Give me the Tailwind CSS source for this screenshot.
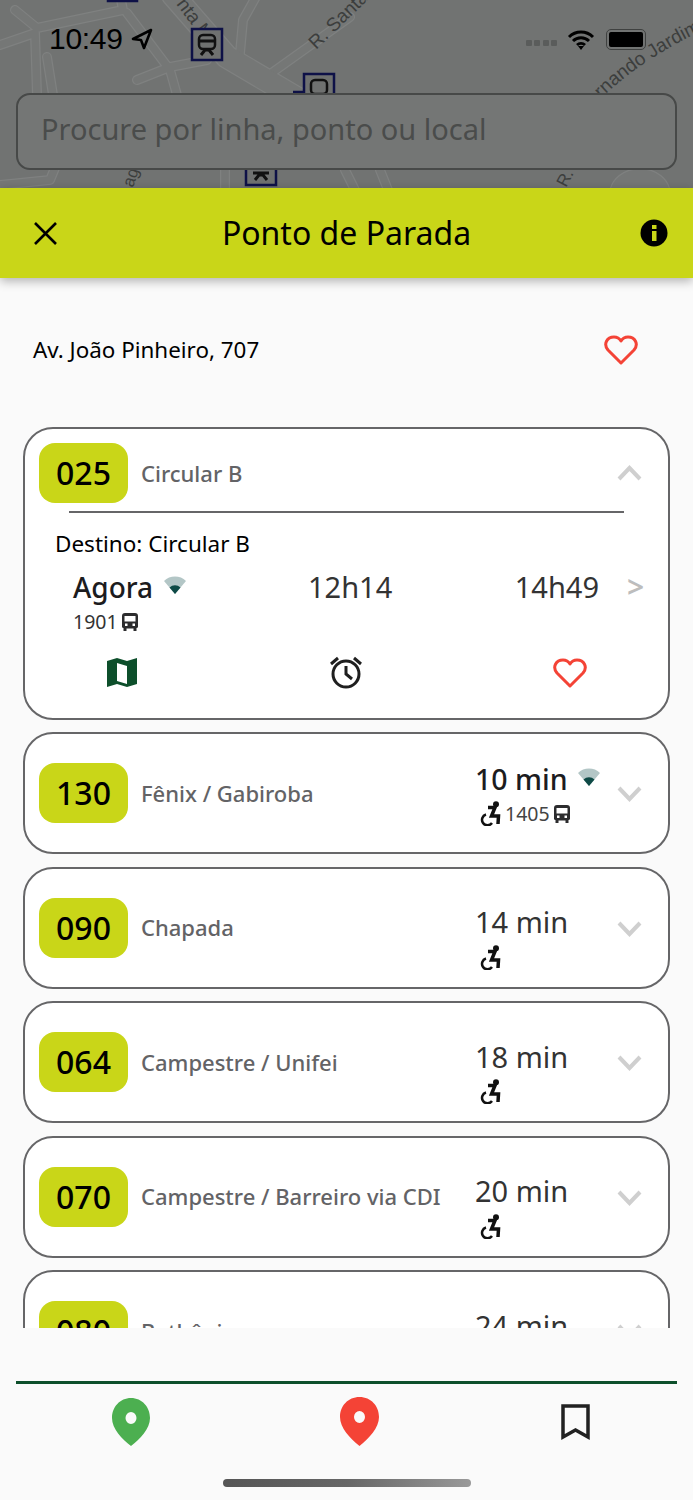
<!DOCTYPE html>
<html lang="pt-BR">
<head>
    <meta charset="UTF-8">
    <meta name="viewport" content="width=device-width, initial-scale=1.0">
    <title>Ponto de Parada</title>
    <script src="https://cdn.jsdelivr.net/npm/@tailwindcss/browser@4"></script>
</head>
<body class="font-['Noto_Sans','Open_Sans',sans-serif] bg-[#fafafa]">
    <div class="w-[693px] h-[1500px] flex flex-col overflow-hidden">
        <!-- Map + search -->
        <section class="relative h-[188px] shrink-0 bg-[#717372] overflow-hidden">
            <svg class="absolute inset-0" width="693" height="188" viewBox="0 0 693 188" fill="none">
                <g stroke="#7f8180" stroke-linecap="round" stroke-linejoin="round">
                    <path stroke-width="10" d="M15 10 L37 28 L123 10 L120 -5 M0 45 L35 33 L37 95 M47 57 L53 95 M127 13 L170 70 L177 95 M137 80 L170 67 L207 60 M240 53 L243 20 L257 -5 M273 72 L350 17 M225 165 V190 M345 170 L355 190 M380 170 L388 190 M0 185 L50 180 L55 168"/>
                    <path stroke-width="24" d="M173 -5 L227 57 L300 100"/>
                    <path stroke-width="22" d="M620 195 A20 16 0 0 1 660 195"/>
                </g>
                <g stroke="#757776" stroke-linecap="round" stroke-linejoin="round">
                    <path stroke-width="7.500" d="M15 10 L37 28 L123 10 L120 -5 M0 45 L35 33 L37 95 M47 57 L53 95 M127 13 L170 70 L177 95 M137 80 L170 67 L207 60 M240 53 L243 20 L257 -5 M273 72 L350 17 M225 165 V190 M345 170 L355 190 M380 170 L388 190 M0 185 L50 180 L55 168"/>
                    <path stroke-width="21.500" d="M173 -5 L227 57 L300 100"/>
                    <path stroke-width="19.500" d="M620 195 A20 16 0 0 1 660 195"/>
                </g>
                <text transform="translate(176 4) rotate(53)" fill="#3c3e3d" font-size="19" font-family="Liberation Sans">nta Ma</text>
                <text transform="translate(316 50) rotate(-44)" fill="#3c3e3d" font-size="19" font-family="Liberation Sans">R. Santa</text>
                <path id="fernandoRoad" d="M594 106 Q 636 60 720 22"/>
                <text fill="#3c3e3d" font-size="19" font-family="Liberation Sans"><textPath href="#fernandoRoad">ernando Jardim</textPath></text>
                <text transform="translate(133 188) rotate(-72)" fill="#3c3e3d" font-size="17" font-family="Liberation Sans">age</text>
                <text transform="translate(566 188) rotate(-62)" fill="#3c3e3d" font-size="17" font-family="Liberation Sans">R. C</text>
                <!-- stop markers -->
                <rect x="108" y="-30" width="29" height="31" stroke="#0e1147" stroke-width="2.500"/>
                <g transform="translate(192 29)">
                    <rect width="30" height="31" fill="#6f7170" stroke="#0e1147" stroke-width="2.500"/>
                    <rect x="7" y="6" width="16" height="14" rx="4" stroke="#111" stroke-width="2.500"/>
                    <path d="M7 12 H23 M9 26 L13 21 H17 L21 26" stroke="#111" stroke-width="3"/>
                </g>
                <path d="M293 92 H303" stroke="#0e1147" stroke-width="2.500"/>
                <g transform="translate(304 74)">
                    <rect width="30" height="31" fill="#6f7170" stroke="#0e1147" stroke-width="2.500"/>
                    <rect x="7" y="6" width="16" height="14" rx="4" stroke="#111" stroke-width="2.500"/>
                </g>
                <g transform="translate(246 154)">
                    <rect width="30" height="31" fill="#6f7170" stroke="#0e1147" stroke-width="2.500"/>
                    <path d="M7 19 H23 M9 26 L13 21 H17 L21 26" stroke="#111" stroke-width="3"/>
                </g>
            </svg>

            <!-- status bar -->
            <div class="absolute left-[49px] right-[47px] top-[22px] flex items-center justify-between text-black">
                <div class="flex items-center gap-[8px]">
                    <span class="font-['Liberation_Sans'] text-[30px] leading-[34px] tracking-[-0.3px]">10:49</span>
                    <svg width="22" height="22" viewBox="0 0 22 22" fill="none"><path d="M20 2 L2 11 L10 12 L13 20 Z" stroke="#000" stroke-width="2.600" stroke-linejoin="round"/></svg>
                </div>
                <div class="flex items-center gap-[10px] pt-[1px]">
                    <div class="flex gap-[2.500px] mt-[6px]">
                        <span class="w-[6px] h-[6px] bg-[#5a5c5b] rounded-[1px]"></span>
                        <span class="w-[6px] h-[6px] bg-[#5a5c5b] rounded-[1px]"></span>
                        <span class="w-[6px] h-[6px] bg-[#5a5c5b] rounded-[1px]"></span>
                        <span class="w-[6px] h-[6px] bg-[#5a5c5b] rounded-[1px]"></span>
                    </div>
                    <svg width="28" height="20" viewBox="0 0 28 20" fill="none">
                        <path d="M2 7 A17 17 0 0 1 26 7 M6 11 A11.500 11.500 0 0 1 22 11 M10 15 A6 6 0 0 1 18 15" stroke="#000" stroke-width="3"/>
                        <path d="M11 16 L14 20 L17 16 Z" fill="#000"/>
                    </svg>
                    <div class="w-[40px] h-[21px] rounded-[5px] border border-[#3f4140] p-[2px] ml-[1px]">
                        <div class="w-full h-full bg-black rounded-[2px]"></div>
                    </div>
                </div>
            </div>

            <!-- search -->
            <div class="absolute left-[16px] top-[93px] w-[661px] h-[77px] rounded-[14px] border-2 border-[#474948] bg-[#747675] flex items-center pl-[23px]">
                <span class="text-[29px] leading-[40px] -mt-[6px] text-[#4a4c4b]">Procure por linha, ponto ou local</span>
            </div>
        </section>

        <!-- Header -->
        <header class="relative z-10 h-[90px] shrink-0 bg-[#c9d618] flex items-center justify-between pl-[33px] pr-[25px] shadow-[0_3px_10px_rgba(0,0,0,0.3)]">
            <svg width="25" height="25" viewBox="0 0 25 25" fill="none"><path d="M2 2 L23 23 M23 2 L2 23" stroke="#000" stroke-width="2.600"/></svg>
            <h1 class="text-[32px] leading-none text-black -ml-[5px]">Ponto de Parada</h1>
            <svg width="28" height="28" viewBox="0 0 28 28"><circle cx="14" cy="14" r="13.500" fill="#000"/><rect x="12" y="12" width="4.500" height="10" fill="#c9d618"/><rect x="12" y="6" width="4.500" height="4" fill="#c9d618"/></svg>
        </header>

        <!-- Content -->
        <main class="flex-1 min-h-0 overflow-hidden bg-[#fafafa]">
            <div class="h-[149px] flex items-center justify-between pl-[33px] pr-[55px] pb-[5px]">
                <span class="text-[22.400px] text-black">Av. João Pinheiro, 707</span>
                <svg width="34" height="30" viewBox="0 0 34 30" fill="none"><path d="M17 28 L4 15 C-1 9 3 2 10 2 C13 2 15.500 3.500 17 6 C18.500 3.500 21 2 24 2 C31 2 35 9 30 15 Z" stroke="#f44336" stroke-width="3" stroke-linejoin="round"/></svg>
            </div>

            <div class="flex flex-col gap-[12.500px] px-[23px]">
                <!-- expanded card -->
                <article class="h-[292.500px] shrink-0 rounded-[30px] border-2 border-[#666668] bg-white pt-[14px]">
                    <div class="flex items-center pl-[14px] pr-[26px]">
                        <div class="w-[89px] h-[60px] rounded-[16px] bg-[#c9d618] flex items-center justify-center text-[32px] font-medium text-black">025</div>
                        <span class="ml-[13px] text-[22px] font-medium text-[#636366]">Circular B</span>
                        <svg class="ml-auto" width="25" height="16" viewBox="0 0 25 16" fill="none"><path d="M2 14 L12.500 3 L23 14" stroke="#cfcfcf" stroke-width="4"/></svg>
                    </div>
                    <div class="mx-[44px] mt-[8px] h-[1.500px] bg-[#666668]"></div>
                    <p class="ml-[30px] mt-[15px] text-[22.500px] leading-[32px] text-black">Destino: Circular B</p>
                    <div class="flex items-start mt-[7px] pl-[48px]">
                        <div class="w-[180px]">
                            <div class="flex items-center gap-[10px]">
                                <span class="text-[28px] leading-[40px] font-medium text-[#1c1c1e]">Agora</span>
                                <svg class="-mt-[3px]" width="24" height="19" viewBox="0 0 24 19"><path d="M1 5 A16 16 0 0 1 23 5 L12 18 Z" fill="#b3c6c6"/><path d="M6.500 11.500 A8 8 0 0 1 17.500 11.500 L12 18 Z" fill="#0e4a46"/></svg>
                            </div>
                            <div class="flex items-center gap-[4px] mt-[1px]">
                                <span class="text-[19.500px] leading-[28px] text-[#333]">1901</span>
                                <svg width="16" height="18" viewBox="0 0 16 18"><path fill-rule="evenodd" d="M3 0 H13 A3 3 0 0 1 16 3 V14 A1.500 1.500 0 0 1 14.500 15 V18 H11.500 V15.500 H4.500 V18 H1.500 V15 A1.500 1.500 0 0 1 0 14 V3 A3 3 0 0 1 3 0 Z M2.500 3 V8.500 H13.500 V3 Z M3 10.500 V13 H5.500 V10.500 Z M10.500 10.500 V13 H13 V10.500 Z" fill="#2c2c2e"/></svg>
                            </div>
                        </div>
                        <span class="w-[139px] pl-[55px] text-[29px] leading-[40px] text-[#333]">12h14</span>
                        <span class="w-[207px] text-right text-[29px] leading-[40px] text-[#333]">14h49</span>
                        <span class="ml-[28px] text-[30px] leading-[40px] font-semibold text-[#bdbdbd]">&gt;</span>
                    </div>
                    <div class="flex items-center justify-between pl-[82px] pr-[81px] mt-[20px]">
                        <svg width="30" height="30" viewBox="0 0 30 30"><path fill-rule="evenodd" d="M0 3 L10 0 L20 3 L30 0 V26 L20 29 L10 26 L0 29 Z M10 5 V23 L20 26 V8 Z" fill="#0d4f2b"/></svg>
                        <svg class="ml-[2px]" width="34" height="34" viewBox="0 0 34 34" fill="none">
                            <circle cx="17" cy="18" r="13" stroke="#1f1f1f" stroke-width="3"/>
                            <path d="M17 10 V18 L23 23 M2 8 L9 2 M32 8 L25 2" stroke="#1f1f1f" stroke-width="3"/>
                        </svg>
                        <svg width="34" height="30" viewBox="0 0 34 30" fill="none"><path d="M17 28 L4 15 C-1 9 3 2 10 2 C13 2 15.500 3.500 17 6 C18.500 3.500 21 2 24 2 C31 2 35 9 30 15 Z" stroke="#f44336" stroke-width="3" stroke-linejoin="round"/></svg>
                    </div>
                </article>

                <!-- 130 -->
                <article class="h-[122px] shrink-0 rounded-[30px] border-2 border-[#666668] bg-white flex items-center pl-[14px] pr-[26px]">
                    <div class="w-[89px] h-[60px] rounded-[16px] bg-[#c9d618] flex items-center justify-center text-[32px] font-medium text-black">130</div>
                    <span class="ml-[13px] text-[22px] font-medium text-[#636366]">Fênix / Gabiroba</span>
                    <div class="ml-auto w-[128px]">
                        <div class="flex items-center gap-[9px] whitespace-nowrap">
                            <span class="text-[28.500px] leading-[40px] font-medium text-[#1c1c1e]">10 min</span>
                            <svg class="-mt-[2px]" width="24" height="19" viewBox="0 0 24 19"><path d="M1 5 A16 16 0 0 1 23 5 L12 18 Z" fill="#b3c6c6"/><path d="M6.500 11.500 A8 8 0 0 1 17.500 11.500 L12 18 Z" fill="#0e4a46"/></svg>
                        </div>
                        <div class="flex items-center gap-[4px] pl-[5px] mt-[1px]">
                            <svg width="21" height="25" viewBox="0 0 21 25" fill="none"><circle cx="16" cy="3.300" r="3" fill="#111"/><path d="M8 6.500 H15 L11.500 15 H18.500 L18 23" stroke="#111" stroke-width="3.500"/><path d="M6 13.500 A5.500 5.500 0 1 0 12 22" stroke="#111" stroke-width="2.500"/></svg>
                            <span class="text-[19.500px] leading-[28px] text-[#444]">1405</span>
                            <svg width="16" height="18" viewBox="0 0 16 18"><path fill-rule="evenodd" d="M3 0 H13 A3 3 0 0 1 16 3 V14 A1.500 1.500 0 0 1 14.500 15 V18 H11.500 V15.500 H4.500 V18 H1.500 V15 A1.500 1.500 0 0 1 0 14 V3 A3 3 0 0 1 3 0 Z M2.500 3 V8.500 H13.500 V3 Z M3 10.500 V13 H5.500 V10.500 Z M10.500 10.500 V13 H13 V10.500 Z" fill="#2c2c2e"/></svg>
                        </div>
                    </div>
                    <svg class="ml-[14px] mt-[2px]" width="25" height="16" viewBox="0 0 25 16" fill="none"><path d="M2 2 L12.500 13 L23 2" stroke="#cfcfcf" stroke-width="4"/></svg>
                </article>

                <!-- 090 -->
                <article class="h-[122px] shrink-0 rounded-[30px] border-2 border-[#666668] bg-white flex items-center pl-[14px] pr-[26px]">
                    <div class="w-[89px] h-[60px] rounded-[16px] bg-[#c9d618] flex items-center justify-center text-[32px] font-medium text-black">090</div>
                    <span class="ml-[13px] text-[22px] font-medium text-[#636366]">Chapada</span>
                    <div class="ml-auto w-[128px] mt-[18px]">
                        <span class="block text-[29px] leading-[40px] text-[#333]">14 min</span>
                        <div class="pl-[5px] h-[28px] mt-[1px] flex items-center">
                            <svg width="21" height="25" viewBox="0 0 21 25" fill="none"><circle cx="16" cy="3.300" r="3" fill="#111"/><path d="M8 6.500 H15 L11.500 15 H18.500 L18 23" stroke="#111" stroke-width="3.500"/><path d="M6 13.500 A5.500 5.500 0 1 0 12 22" stroke="#111" stroke-width="2.500"/></svg>
                        </div>
                    </div>
                    <svg class="ml-[14px] mt-[2px]" width="25" height="16" viewBox="0 0 25 16" fill="none"><path d="M2 2 L12.500 13 L23 2" stroke="#cfcfcf" stroke-width="4"/></svg>
                </article>

                <!-- 064 -->
                <article class="h-[122px] shrink-0 rounded-[30px] border-2 border-[#666668] bg-white flex items-center pl-[14px] pr-[26px]">
                    <div class="w-[89px] h-[60px] rounded-[16px] bg-[#c9d618] flex items-center justify-center text-[32px] font-medium text-black">064</div>
                    <span class="ml-[13px] text-[22px] font-medium text-[#636366]">Campestre / Unifei</span>
                    <div class="ml-auto w-[128px] mt-[18px]">
                        <span class="block text-[29px] leading-[40px] text-[#333]">18 min</span>
                        <div class="pl-[5px] h-[28px] mt-[1px] flex items-center">
                            <svg width="21" height="25" viewBox="0 0 21 25" fill="none"><circle cx="16" cy="3.300" r="3" fill="#111"/><path d="M8 6.500 H15 L11.500 15 H18.500 L18 23" stroke="#111" stroke-width="3.500"/><path d="M6 13.500 A5.500 5.500 0 1 0 12 22" stroke="#111" stroke-width="2.500"/></svg>
                        </div>
                    </div>
                    <svg class="ml-[14px] mt-[2px]" width="25" height="16" viewBox="0 0 25 16" fill="none"><path d="M2 2 L12.500 13 L23 2" stroke="#cfcfcf" stroke-width="4"/></svg>
                </article>

                <!-- 070 -->
                <article class="h-[122px] shrink-0 rounded-[30px] border-2 border-[#666668] bg-white flex items-center pl-[14px] pr-[26px]">
                    <div class="w-[89px] h-[60px] rounded-[16px] bg-[#c9d618] flex items-center justify-center text-[32px] font-medium text-black">070</div>
                    <span class="ml-[13px] text-[22px] font-medium text-[#636366] whitespace-nowrap">Campestre / Barreiro via CDI</span>
                    <div class="ml-auto w-[128px] mt-[18px]">
                        <span class="block text-[29px] leading-[40px] text-[#333]">20 min</span>
                        <div class="pl-[5px] h-[28px] mt-[1px] flex items-center">
                            <svg width="21" height="25" viewBox="0 0 21 25" fill="none"><circle cx="16" cy="3.300" r="3" fill="#111"/><path d="M8 6.500 H15 L11.500 15 H18.500 L18 23" stroke="#111" stroke-width="3.500"/><path d="M6 13.500 A5.500 5.500 0 1 0 12 22" stroke="#111" stroke-width="2.500"/></svg>
                        </div>
                    </div>
                    <svg class="ml-[14px] mt-[2px]" width="25" height="16" viewBox="0 0 25 16" fill="none"><path d="M2 2 L12.500 13 L23 2" stroke="#cfcfcf" stroke-width="4"/></svg>
                </article>

                <!-- 080, cut off by the footer -->
                <article class="h-[122px] shrink-0 rounded-[30px] border-2 border-[#666668] bg-white flex items-center pl-[14px] pr-[26px]">
                    <div class="w-[89px] h-[60px] rounded-[16px] bg-[#c9d618] flex items-center justify-center text-[32px] font-medium text-black">080</div>
                    <span class="ml-[13px] text-[22px] font-medium text-[#636366]">Bethânia</span>
                    <div class="ml-auto w-[128px] mt-[18px]">
                        <span class="block text-[29px] leading-[40px] text-[#333]">24 min</span>
                        <div class="h-[28px] mt-[1px]"></div>
                    </div>
                    <svg class="ml-[14px] mt-[2px]" width="25" height="16" viewBox="0 0 25 16" fill="none"><path d="M2 2 L12.500 13 L23 2" stroke="#cfcfcf" stroke-width="4"/></svg>
                </article>
            </div>
        </main>

        <!-- Footer nav -->
        <footer class="relative h-[172px] shrink-0 bg-[#fafafa] pt-[53px]">
            <div class="mx-[16px] h-[3px] bg-[#0d4f2b]"></div>
            <div class="relative h-[116px]">
                <svg class="absolute left-[112px] top-[14px]" width="38" height="48" viewBox="0 0 38 48"><path fill-rule="evenodd" d="M19 0 C30 0 38 9 38 20 C38 31 28 41 19 48 C10 41 0 31 0 20 C0 9 8 0 19 0 Z M19 14 A5.500 6 0 1 0 19 26 A5.500 6 0 1 0 19 14 Z" fill="#4caf50"/></svg>
                <svg class="absolute left-[340px] top-[13px]" width="39" height="49" viewBox="0 0 39 49"><path fill-rule="evenodd" d="M19.500 0 C31 0 39 9 39 20 C39 31 29 41 19.500 49 C10 41 0 31 0 20 C0 9 8 0 19.500 0 Z M19.500 14 A5.500 6 0 1 0 19.500 26 A5.500 6 0 1 0 19.500 14 Z" fill="#f44336"/></svg>
                <svg class="absolute left-[561px] top-[20px]" width="29" height="37" viewBox="0 0 29 37" fill="none"><path d="M2 2 H27 V33 L14.500 26 L2 33 Z" stroke="#212121" stroke-width="3.500"/></svg>
            </div>
            <div class="absolute left-[223px] bottom-[13px] w-[248px] h-[8px] rounded-full bg-gradient-to-r from-[#555] via-[#666] to-[#999]"></div>
        </footer>
    </div>
</body>
</html>
